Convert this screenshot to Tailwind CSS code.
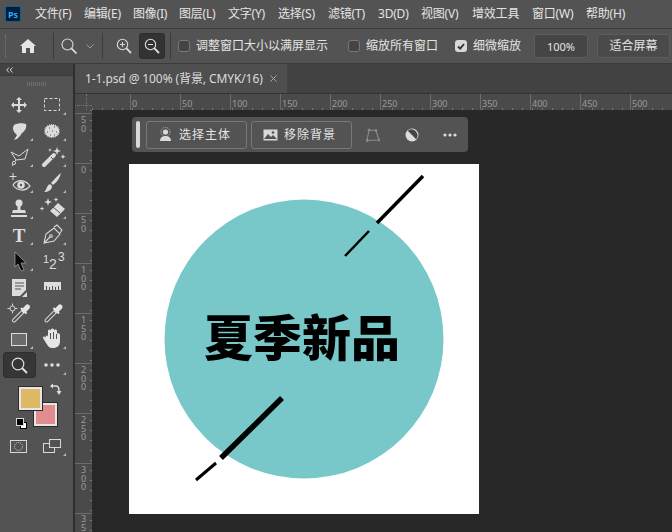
<!DOCTYPE html>
<html lang="zh">
<head>
<meta charset="utf-8">
<script src="https://cdn.jsdelivr.net/npm/@tailwindcss/browser@4"></script>
</head>
<body class="m-0 bg-[#282828]">
<div class="w-[672px] h-[532px] overflow-hidden flex flex-col bg-[#282828] text-[#e4e4e4] text-[12px] font-['Noto_Sans','Noto_Sans_CJK_SC',sans-serif]">

  <!-- menu bar -->
  <div class="h-[28px] shrink-0 bg-[#535353] flex items-center relative">
    <div class="ml-[5px] w-[16px] h-[16px] rounded-[2px] bg-[#001e36] border border-[#0f5f9c] flex items-center justify-center text-[9px] font-bold text-[#31a8ff] leading-none">Ps</div>
    <div class="flex ml-[14px] leading-none tracking-[-0.2px]">
      <span class="w-[49px]">文件(F)</span>
      <span class="w-[49px]">编辑(E)</span>
      <span class="w-[46px]">图像(I)</span>
      <span class="w-[49px]">图层(L)</span>
      <span class="w-[50px]">文字(Y)</span>
      <span class="w-[50px]">选择(S)</span>
      <span class="w-[50px]">滤镜(T)</span>
      <span class="w-[43px]">3D(D)</span>
      <span class="w-[51px]">视图(V)</span>
      <span class="w-[60px]">增效工具</span>
      <span class="w-[54px]">窗口(W)</span>
      <span>帮助(H)</span>
    </div>
  </div>

  <!-- options bar -->
  <div class="h-[36px] shrink-0 bg-[#535353] border-t border-b border-[#3c3c3c] flex items-center">
    <div class="ml-[5px] w-[2px] h-[22px] border-l border-dotted border-[#7a7a7a]"></div>
    <svg class="ml-[13px] w-[16px] h-[14px]" viewBox="0 0 16 14"><path d="M8 0 L16 7 H14 V14 H10 V9 H6 V14 H2 V7 H0 Z" fill="#e6e6e6"/></svg>
    <div class="ml-[17px] w-px h-[26px] bg-[#3c3c3c]"></div>
    <svg class="ml-[7px] w-[16px] h-[16px]" viewBox="0 0 16 16" fill="none" stroke="#d8d8d8"><circle cx="6.5" cy="6.5" r="5.5" stroke-width="1.1"/><path d="M10.4 10.4 L15.5 15.5" stroke-width="1.8"/></svg>
    <svg class="ml-[9px] w-[8px] h-[5px]" viewBox="0 0 8 5" fill="none" stroke="#9a9a9a"><path d="M0.5 0.5 L4 4 L7.5 0.5"/></svg>
    <div class="ml-[8px] w-px h-[26px] bg-[#3c3c3c]"></div>
    <svg class="ml-[13px] w-[16px] h-[16px]" viewBox="0 0 16 16" fill="none" stroke="#d8d8d8"><circle cx="6.5" cy="6.5" r="5.2" stroke-width="1.1"/><path d="M10.2 10.2 L15 15" stroke-width="1.8"/><path d="M6.5 4 V9 M4 6.5 H9"/></svg>
    <div class="ml-[7px] w-[26px] h-[26px] bg-[#333333] border border-[#2c2c2c] rounded-[3px] flex items-center justify-center">
      <svg class="w-[16px] h-[16px]" viewBox="0 0 16 16" fill="none" stroke="#e0e0e0"><circle cx="6.5" cy="6.5" r="5.2" stroke-width="1.1"/><path d="M10.2 10.2 L15 15" stroke-width="1.8"/><path d="M4 6.5 H9"/></svg>
    </div>
    <div class="ml-[5px] w-px h-[26px] bg-[#3c3c3c]"></div>
    <div class="ml-[7px] w-[12px] h-[12px] bg-[#444444] border border-[#777777] rounded-[3px]"></div>
    <span class="ml-[6px] w-[152px] leading-none">调整窗口大小以满屏显示</span>
    <div class="w-[12px] h-[12px] bg-[#444444] border border-[#777777] rounded-[3px]"></div>
    <span class="ml-[6px] w-[89px] leading-none">缩放所有窗口</span>
    <div class="w-[12px] h-[12px] bg-[#d8d8d8] rounded-[3px] flex items-center justify-center">
      <svg class="w-[8px] h-[7px]" viewBox="0 0 8 7" fill="none" stroke="#333333" stroke-width="1.8"><path d="M1 3.5 L3.2 5.6 L7 1"/></svg>
    </div>
    <span class="ml-[6px] w-[61px] leading-none">细微缩放</span>
    <div class="w-[54px] h-[24px] bg-[#454545] border border-[#5c5c5c] rounded-[3px] flex items-center justify-center text-[11px] leading-none">100%</div>
    <div class="ml-[9px] w-[73px] h-[24px] bg-[#4a4a4a] border border-[#5c5c5c] rounded-[3px] flex items-center justify-center leading-none">适合屏幕</div>
  </div>

  <!-- work area -->
  <div class="flex-1 min-h-0 flex">
    <!-- tool panel -->
    <div class="w-[73px] shrink-0 bg-[#535353] flex flex-col">
      <div class="h-[12px] bg-[#424242] border-b border-[#3a3a3a] flex items-center pl-[6px] text-[9px] leading-none text-[#d8d8d8]">
        <svg class="w-[7px] h-[6px]" viewBox="0 0 7 6" fill="none" stroke="#d8d8d8"><path d="M3 0.5 L0.7 3 L3 5.5 M6.5 0.5 L4.2 3 L6.5 5.5"/></svg>
      </div>
      <div class="h-[16px] flex items-center justify-center">
        <div class="w-[20px] h-[4px] bg-[repeating-linear-gradient(90deg,#6e6e6e_0,#6e6e6e_1px,transparent_1px,transparent_2px)]"></div>
      </div>
      <div class="ml-[3px] grid grid-cols-[33px_33px] auto-rows-[26px]">
        <!-- move -->
        <svg viewBox="0 0 33 26" fill="#dcdcdc"><path d="M16 5 L19 8 H17 V12 H21 V10 L24 13 L21 16 V14 H17 V18 H19 L16 21 L13 18 H15 V14 H11 V16 L8 13 L11 10 V12 H15 V8 H13 Z"/></svg>
        <!-- marquee -->
        <svg viewBox="0 0 33 26"><rect x="8.5" y="6.5" width="15" height="12" fill="none" stroke="#d8d8d8" stroke-dasharray="3 2"/><path d="M30 20 V23 H27 Z" fill="#b8b8b8"/></svg>
        <!-- lasso -->
        <svg viewBox="0 0 33 26"><path d="M11 7 C14 5 20 5 23 6 C24 10 22 13 19 15 L17 18 L14 21 L11 22 L14 17 C10 14 9 10 11 7 Z" fill="#dcdcdc"/><path d="M30 20 V23 H27 Z" fill="#b8b8b8"/></svg>
        <!-- quick select -->
        <svg viewBox="0 0 33 26"><ellipse cx="16" cy="13" rx="8" ry="7" fill="#dcdcdc"/><ellipse cx="16" cy="13" rx="8" ry="7" fill="none" stroke="#535353" stroke-width="2" stroke-dasharray="1 1.2"/><path d="M13 10h1M18 9h1M11 14h1M16 13h1M20 14h1M14 17h1M18 17h1" stroke="#535353"/><path d="M30 20 V23 H27 Z" fill="#b8b8b8"/></svg>
        <!-- polygon lasso -->
        <svg viewBox="0 0 33 26" fill="none" stroke="#d8d8d8"><path d="M8 8 L16 12 L25 5 L22 15 L13 16 Z"/><circle cx="11" cy="19" r="1.6"/><path d="M13 16 L11 18 M10 20 L9 22"/><path d="M30 20 V23 H27 Z" fill="#b8b8b8" stroke="none"/></svg>
        <!-- wand -->
        <svg viewBox="0 0 33 26"><path d="M8 21 L18 11" stroke="#dcdcdc" stroke-width="4" stroke-linecap="round"/><path d="M15 13 L18 16" stroke="#535353"/><path d="M21 3 L22 6 L25 7 L22 8 L21 11 L20 8 L17 7 L20 6 Z M27 10 L27.7 12 L29.5 12.7 L27.7 13.4 L27 15 L26.3 13.4 L24.5 12.7 L26.3 12 Z M14 4 L14.5 5.5 L16 6 L14.5 6.5 L14 8 L13.5 6.5 L12 6 L13.5 5.5 Z" fill="#dcdcdc"/><path d="M30 20 V23 H27 Z" fill="#b8b8b8"/></svg>
        <!-- spot heal -->
        <svg viewBox="0 0 33 26"><path d="M10 3 V10 M6.5 6.5 H13.5" stroke="#dcdcdc"/><path d="M10 15 C14 9 22 9 27 16 C22 22 14 21 10 15 Z" fill="none" stroke="#dcdcdc" stroke-width="1.2"/><circle cx="18" cy="15" r="3.8" fill="#dcdcdc"/><circle cx="18" cy="15" r="1.2" fill="#535353"/><path d="M30 20 V23 H27 Z" fill="#b8b8b8"/></svg>
        <!-- brush -->
        <svg viewBox="0 0 33 26"><path d="M25 3 C24 8 20 13 17 15 L15 13 C18 10 22 5 25 3 Z M14 14 L16 16 C16 20 12 22 8 22 C11 20 10 16 14 14 Z" fill="#dcdcdc"/><path d="M30 20 V23 H27 Z" fill="#b8b8b8"/></svg>
        <!-- stamp -->
        <svg viewBox="0 0 33 26" fill="#dcdcdc"><circle cx="16" cy="7" r="3.5"/><rect x="14.5" y="9" width="3" height="5"/><path d="M10 14 H22 L23 17 H9 Z"/><rect x="8" y="19" width="16" height="2"/><path d="M30 20 V23 H27 Z" fill="#b8b8b8"/></svg>
        <!-- magic eraser -->
        <svg viewBox="0 0 33 26"><path d="M22 7 L29 13 L21 21 L14 15 Z" fill="#dcdcdc"/><path d="M17 11 L24 17" stroke="#535353"/><path d="M12 2 L13 5 L16 6 L13 7 L12 10 L11 7 L8 6 L11 5 Z M20 1 L20.6 3 L22.5 3.6 L20.6 4.2 L20 6 L19.4 4.2 L17.5 3.6 L19.4 3 Z M6 10 L6.6 12 L8.5 12.6 L6.6 13.2 L6 15 L5.4 13.2 L3.5 12.6 L5.4 12 Z" fill="#dcdcdc"/><path d="M30 20 V23 H27 Z" fill="#b8b8b8"/></svg>
        <!-- type -->
        <svg viewBox="0 0 33 26"><text x="16" y="20" text-anchor="middle" font-family="Liberation Serif" font-weight="700" font-size="19" fill="#dcdcdc">T</text><path d="M30 20 V23 H27 Z" fill="#b8b8b8"/></svg>
        <!-- pen -->
        <svg viewBox="0 0 33 26" fill="none" stroke="#d8d8d8" stroke-width="1.1"><path d="M8 21 L10 12 L18 6 L24 12 L18 19 Z M8 21 L14 15"/><circle cx="15" cy="14" r="1.3"/><path d="M18 5 L21 3 L26 8 L24 11"/><path d="M30 20 V23 H27 Z" fill="#b8b8b8" stroke="none"/></svg>
        <!-- arrow -->
        <svg viewBox="0 0 33 26"><path d="M12 4 L23 15 H18 L21 22 L18 23 L15 16 L12 19 Z" fill="#0a0a0a" stroke="#bdbdbd" stroke-width="0.6"/><path d="M30 20 V23 H27 Z" fill="#b8b8b8"/></svg>
        <!-- 123 -->
        <svg viewBox="0 0 33 26" fill="#dcdcdc" font-family="Liberation Sans" font-size="11"><text x="7" y="15">1</text><text x="13" y="21" font-size="14">2</text><text x="22" y="13" font-size="12">3</text></svg>
        <!-- note -->
        <svg viewBox="0 0 33 26"><path d="M9 5 H23 V16 L17 22 H9 Z" fill="#dcdcdc"/><path d="M12 9 H21 M12 12 H21 M12 15 H18" stroke="#535353"/><path d="M24 18 L19 23 H24 Z" fill="#dcdcdc"/></svg>
        <!-- ruler -->
        <svg viewBox="0 0 33 26"><rect x="8" y="8" width="17" height="8" fill="#dcdcdc"/><path d="M10.5 12 V16 M13.5 13 V16 M16.5 12 V16 M19.5 13 V16 M22.5 12 V16" stroke="#535353"/></svg>
        <!-- color sampler -->
        <svg viewBox="0 0 33 26"><circle cx="9.5" cy="8.5" r="2.5" fill="none" stroke="#d8d8d8"/><path d="M9.5 3.5 V6 M9.5 11 V13.5 M4.5 8.5 H7 M12 8.5 H14.5" stroke="#d8d8d8"/><path d="M11 20.5 L20 11.5" stroke="#d8d8d8" stroke-width="4" stroke-linecap="round"/><path d="M11 20.5 L20 11.5" stroke="#535353" stroke-width="2" stroke-linecap="round"/><path d="M21 10.5 L24.5 7" stroke="#e4e4e4" stroke-width="5" stroke-linecap="round"/><path d="M18.5 8.5 L23 13" stroke="#e4e4e4" stroke-width="2" stroke-linecap="round"/></svg>
        <!-- eyedropper -->
        <svg viewBox="0 0 33 26"><path d="M10.5 20.5 L19.5 11.5" stroke="#d8d8d8" stroke-width="4" stroke-linecap="round"/><path d="M10.5 20.5 L19.5 11.5" stroke="#535353" stroke-width="2" stroke-linecap="round"/><path d="M20.5 10.5 L24 7" stroke="#e4e4e4" stroke-width="5" stroke-linecap="round"/><path d="M18 8.5 L22.5 13" stroke="#e4e4e4" stroke-width="2" stroke-linecap="round"/></svg>
        <!-- rectangle -->
        <svg viewBox="0 0 33 26"><rect x="8.5" y="7.5" width="15" height="12" fill="#6c6c6c" stroke="#dcdcdc"/><path d="M30 20 V23 H27 Z" fill="#b8b8b8"/></svg>
        <!-- hand -->
        <svg viewBox="0 0 33 26"><path d="M10 12 C9 9 12 9 12 11 L12 5 C12 3 15 3 15 5 L15 4 C15 2 18 2 18 4 L18 5 C18 3 21 3 21 5 L21 8 C21 7 24 7 24 9 L24 15 C24 20 21 22 17 22 C13 22 12 20 10 17 L7 12 C7 10 9 10 10 12 Z" fill="#e6e6e6"/><path d="M14.5 7 V13 M17.5 6 V13 M20.5 8 V13" stroke="#535353"/><path d="M30 20 V23 H27 Z" fill="#b8b8b8"/></svg>
        <!-- zoom active -->
        <div class="w-[33px] h-[26px] bg-[#363636] border border-[#2e2e2e] rounded-[3px] flex items-center justify-center">
          <svg class="w-[17px] h-[17px]" viewBox="0 0 17 17" fill="none" stroke="#e0e0e0"><circle cx="7" cy="7" r="5.8" stroke-width="1.2"/><path d="M11 11 L16 16" stroke-width="2"/></svg>
        </div>
        <!-- more -->
        <svg viewBox="0 0 33 26" fill="#dcdcdc"><circle cx="10" cy="13" r="1.8"/><circle cx="16" cy="13" r="1.8"/><circle cx="22" cy="13" r="1.8"/><path d="M30 20 V23 H27 Z" fill="#b8b8b8"/></svg>
      </div>
      <!-- colours -->
      <div class="relative h-[55px] shrink-0">
        <div class="absolute left-[34px] top-[25px] w-[23px] h-[23px] bg-[#e18d90] border-2 border-[#e6e6e6] outline outline-1 outline-[#2c2c2c]"></div>
        <div class="absolute left-[19px] top-[9px] w-[23px] h-[23px] bg-[#dfb866] border-2 border-[#e6e6e6] outline outline-1 outline-[#2c2c2c]"></div>
        <svg class="absolute left-[49px] top-[5px] w-[13px] h-[13px]" viewBox="0 0 13 13" fill="none" stroke="#dcdcdc" stroke-width="1.5"><path d="M3 3 H7 C9 3 10 5 10 8"/><path d="M1 3 L4 0.5 V5.5 Z M10 12 L7.5 8 H12.5 Z" fill="#dcdcdc" stroke="none"/></svg>
        <div class="absolute left-[20px] top-[44px] w-[7px] h-[7px] bg-white border border-black"></div>
        <div class="absolute left-[16px] top-[40px] w-[8px] h-[8px] bg-black border border-[#d8d8d8]"></div>
      </div>
      <div class="h-[26px] ml-[3px] grid grid-cols-[33px_33px]">
        <svg viewBox="0 0 33 26" class="w-[33px] h-[26px]"><rect x="7.5" y="7.5" width="16" height="12" fill="none" stroke="#d8d8d8"/><circle cx="15.5" cy="13.5" r="4" fill="none" stroke="#d8d8d8" stroke-dasharray="1 1"/></svg>
        <svg viewBox="0 0 33 26" class="w-[33px] h-[26px]"><rect x="7.5" y="10.5" width="11" height="9" fill="none" stroke="#d8d8d8"/><rect x="13.5" y="6.5" width="11" height="8" fill="#535353" stroke="#d8d8d8"/><path d="M30 20 V23 H27 Z" fill="#b8b8b8"/></svg>
      </div>
    </div>
    <div class="w-[2px] shrink-0 bg-[#2e2e2e]"></div>

    <!-- document column -->
    <div class="flex-1 min-w-0 flex flex-col">
      <div class="h-[29px] shrink-0 bg-[#424242] flex">
        <div class="w-[212px] bg-[#4e4e4e] flex items-center pl-[10px] leading-none text-[#dcdcdc]">
          <span class="w-[185px] whitespace-nowrap tracking-[-0.1px]">1-1.psd @ 100% (背景, CMYK/16)</span>
          <svg class="w-[7px] h-[7px]" viewBox="0 0 7 7" stroke="#a8a8a8"><path d="M0.5 0.5 L6.5 6.5 M6.5 0.5 L0.5 6.5"/></svg>
        </div>
      </div>
      <!-- h ruler -->
      <div class="h-[17px] shrink-0 bg-[#4a4a4a] border-t border-[#333333] flex">
        <div class="w-[17px] shrink-0 relative">
          <div class="absolute left-[11px] top-0 h-full border-l border-dotted border-[#777777]"></div>
          <div class="absolute top-[11px] left-0 w-full border-t border-dotted border-[#777777]"></div>
        </div>
        <div class="flex-1 relative overflow-hidden pl-[38px] flex text-[9px] leading-none text-[#9a9a9a]">
          <div class="absolute left-0 right-0 bottom-0 h-[2px] bg-[repeating-linear-gradient(90deg,#7a7a7a_0,#7a7a7a_1px,transparent_1px,transparent_10px)]"></div>
          <span class="w-[50px] h-full shrink-0 border-l border-[#6c6c6c] pl-[1px] pt-[5px]">0</span>
          <span class="w-[50px] h-full shrink-0 border-l border-[#6c6c6c] pl-[1px] pt-[5px]">50</span>
          <span class="w-[50px] h-full shrink-0 border-l border-[#6c6c6c] pl-[1px] pt-[5px]">100</span>
          <span class="w-[50px] h-full shrink-0 border-l border-[#6c6c6c] pl-[1px] pt-[5px]">150</span>
          <span class="w-[50px] h-full shrink-0 border-l border-[#6c6c6c] pl-[1px] pt-[5px]">200</span>
          <span class="w-[50px] h-full shrink-0 border-l border-[#6c6c6c] pl-[1px] pt-[5px]">250</span>
          <span class="w-[50px] h-full shrink-0 border-l border-[#6c6c6c] pl-[1px] pt-[5px]">300</span>
          <span class="w-[50px] h-full shrink-0 border-l border-[#6c6c6c] pl-[1px] pt-[5px]">350</span>
          <span class="w-[50px] h-full shrink-0 border-l border-[#6c6c6c] pl-[1px] pt-[5px]">400</span>
          <span class="w-[50px] h-full shrink-0 border-l border-[#6c6c6c] pl-[1px] pt-[5px]">450</span>
          <span class="w-[50px] h-full shrink-0 border-l border-[#6c6c6c] pl-[1px] pt-[5px]">500</span>
        </div>
      </div>
      <!-- ruler + canvas -->
      <div class="flex-1 min-h-0 flex">
        <div class="w-[17px] shrink-0 bg-[#4a4a4a] relative overflow-hidden pt-[3px] text-[9px] leading-[8.5px] text-[#9a9a9a]">
          <div class="absolute top-0 bottom-0 right-0 w-[2px] bg-[repeating-linear-gradient(180deg,#7a7a7a_0,#7a7a7a_1px,transparent_1px,transparent_10px)]"></div>
          <div class="h-[50px] border-t border-[#6c6c6c] pl-[6px] pt-[2px]"><div class="w-[6px] break-all">50</div></div>
          <div class="h-[50px] border-t border-[#6c6c6c] pl-[6px] pt-[2px]"><div class="w-[6px] break-all">0</div></div>
          <div class="h-[50px] border-t border-[#6c6c6c] pl-[6px] pt-[2px]"><div class="w-[6px] break-all">50</div></div>
          <div class="h-[50px] border-t border-[#6c6c6c] pl-[6px] pt-[2px]"><div class="w-[6px] break-all">100</div></div>
          <div class="h-[50px] border-t border-[#6c6c6c] pl-[6px] pt-[2px]"><div class="w-[6px] break-all">150</div></div>
          <div class="h-[50px] border-t border-[#6c6c6c] pl-[6px] pt-[2px]"><div class="w-[6px] break-all">200</div></div>
          <div class="h-[50px] border-t border-[#6c6c6c] pl-[6px] pt-[2px]"><div class="w-[6px] break-all">250</div></div>
          <div class="h-[50px] border-t border-[#6c6c6c] pl-[6px] pt-[2px]"><div class="w-[6px] break-all">300</div></div>
          <div class="h-[50px] border-t border-[#6c6c6c] pl-[6px] pt-[1px]"><div class="w-[6px] break-all">35</div></div>
        </div>
        <!-- canvas -->
        <div class="flex-1 relative bg-[#282828] overflow-hidden">
          <div class="relative ml-[37px] mt-[54px] w-[350px] h-[350px] bg-white">
            <svg class="absolute inset-0 w-[350px] h-[350px]" viewBox="0 0 350 350">
              <circle cx="175" cy="175" r="139.5" fill="#78c8ca"/>
              <g stroke="#000" fill="none">
                <path d="M294 12 L248 59" stroke-width="3.5"/>
                <path d="M240 67 L216 92" stroke-width="2.5"/>
                <path d="M153 234 L92 294" stroke-width="5.5"/>
                <path d="M87 299 L67 316" stroke-width="3"/>
              </g>
            </svg>
            <div class="absolute left-[75px] top-[143px] w-[196px] text-center text-[49px] leading-[56px] font-black text-black whitespace-nowrap font-['Noto_Sans_CJK_SC',sans-serif]">夏季新品</div>
          </div>
          <!-- floating bar -->
          <div class="absolute left-[40px] top-[7px] w-[336px] h-[35px] bg-[#535353] rounded-[4px] flex items-center pl-[4px]">
            <div class="w-[4px] h-[27px] bg-[#d8d8d8] rounded-[2px]"></div>
            <div class="ml-[6px] w-[101px] h-[28px] border border-[#787878] rounded-[3px] flex items-center pl-[11px] gap-[6px] leading-none">
              <svg class="w-[15px] h-[15px]" viewBox="0 0 15 15"><circle cx="7.5" cy="5" r="4.5" fill="none" stroke="#bdbdbd" stroke-dasharray="1 1"/><circle cx="7.5" cy="5" r="2.6" fill="#d8d8d8"/><path d="M2 14 C2 10 5 9 7.5 9 C10 9 13 10 13 14 Z" fill="#d8d8d8"/></svg>
              <span class="tracking-[1px]">选择主体</span>
            </div>
            <div class="ml-[4px] w-[101px] h-[28px] border border-[#787878] rounded-[3px] flex items-center pl-[11px] gap-[6px] leading-none">
              <svg class="w-[15px] h-[12px]" viewBox="0 0 15 12"><rect x="0.5" y="0.5" width="14" height="11" fill="#d8d8d8"/><path d="M1 10 L5 5 L8 8 L10 6 L14 10 Z" fill="#535353"/><circle cx="10" cy="3.5" r="1.3" fill="#535353"/></svg>
              <span class="tracking-[1px]">移除背景</span>
            </div>
            <svg class="ml-[14px] w-[14px] h-[14px]" viewBox="0 0 14 14" fill="none" stroke="#8c8c8c"><path d="M3 2 L10 2.5 L13 12 L1 12.5 Z" stroke-width="1.1"/><circle cx="3" cy="2" r="1" fill="#8c8c8c"/><circle cx="10" cy="2.5" r="1" fill="#8c8c8c"/><circle cx="13" cy="12" r="1" fill="#8c8c8c"/><circle cx="1" cy="12.5" r="1" fill="#8c8c8c"/></svg>
            <svg class="ml-[25px] w-[14px] h-[14px]" viewBox="0 0 14 14"><circle cx="7" cy="7" r="6.5" fill="#dcdcdc"/><path d="M2.8 2.8 A6 6 0 0 1 11.2 11.2 Z" fill="#444444"/></svg>
            <svg class="ml-[24px] w-[14px] h-[4px]" viewBox="0 0 14 4" fill="#dcdcdc"><circle cx="2" cy="2" r="1.6"/><circle cx="7" cy="2" r="1.6"/><circle cx="12" cy="2" r="1.6"/></svg>
          </div>
        </div>
      </div>
    </div>
  </div>
</div>
</body>
</html>
